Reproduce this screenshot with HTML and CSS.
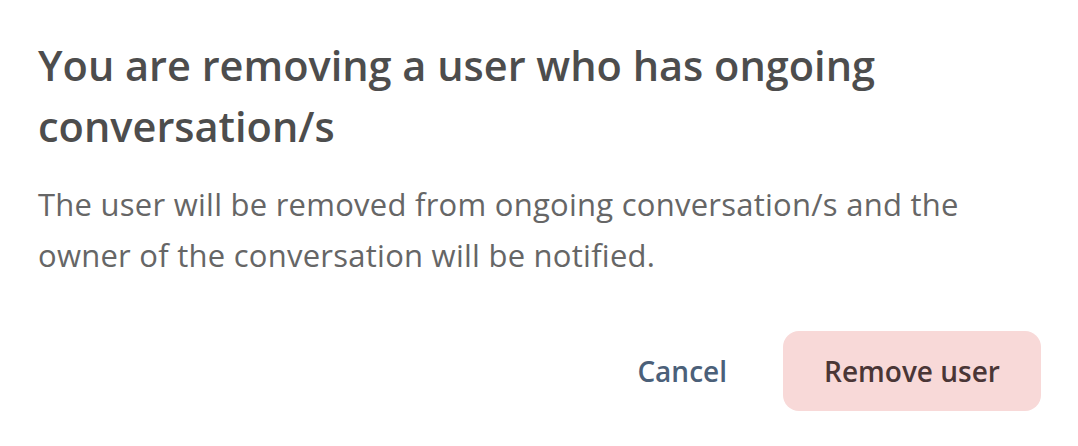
FILE: index.html
```html
<!DOCTYPE html>
<html lang="en">
    <head>
        <meta charset="UTF-8">
        <title>Remove user</title>
        <link rel="stylesheet" href="styles.css">
    </head>

    <body>
        <div class="dialog">
            <h2 class="dialog_title">You are removing a user who has ongoing conversation/s</h2>
            <p class="dialog_text">The user will be removed from ongoing conversation/s and the owner of the conversation will be notified.</p>
            <div class="dialog_actions">
                <button class="btn_cancel">Cancel</button>
                <button class="btn_remove">Remove user</button>
            </div>
        </div>
    </body>
</html>
```

FILE: styles.css
```css
body {
    margin: 0;
    background-color: #ffffff;
    font-family: 'Open Sans', 'Noto Sans', sans-serif;
}

.dialog {
    padding: 35px 37px 0 38px;
}

.dialog_title {
    margin: 0;
    font-size: 41.5px;
    line-height: 61px;
    font-weight: 600;
    color: #4d4d4d;
    max-width: 880px;
}

.dialog_text {
    margin: 22px 0 0 0;
    font-size: 31px;
    line-height: 51px;
    letter-spacing: 0.25px;
    color: #666666;
    max-width: 960px;
}

.dialog_actions {
    display: flex;
    justify-content: flex-end;
    align-items: center;
    gap: 56px;
    margin-top: 50px;
}

.btn_cancel {
    font-family: inherit;
    font-size: 28px;
    font-weight: 600;
    color: #4b6079;
    background-color: transparent;
    border: none;
    padding: 0;
}

.btn_remove {
    font-family: inherit;
    font-size: 28px;
    font-weight: 600;
    color: #4a3636;
    background-color: #f8d9d8;
    border: none;
    border-radius: 16px;
    width: 258px;
    height: 80px;
    padding: 0;
}
```
